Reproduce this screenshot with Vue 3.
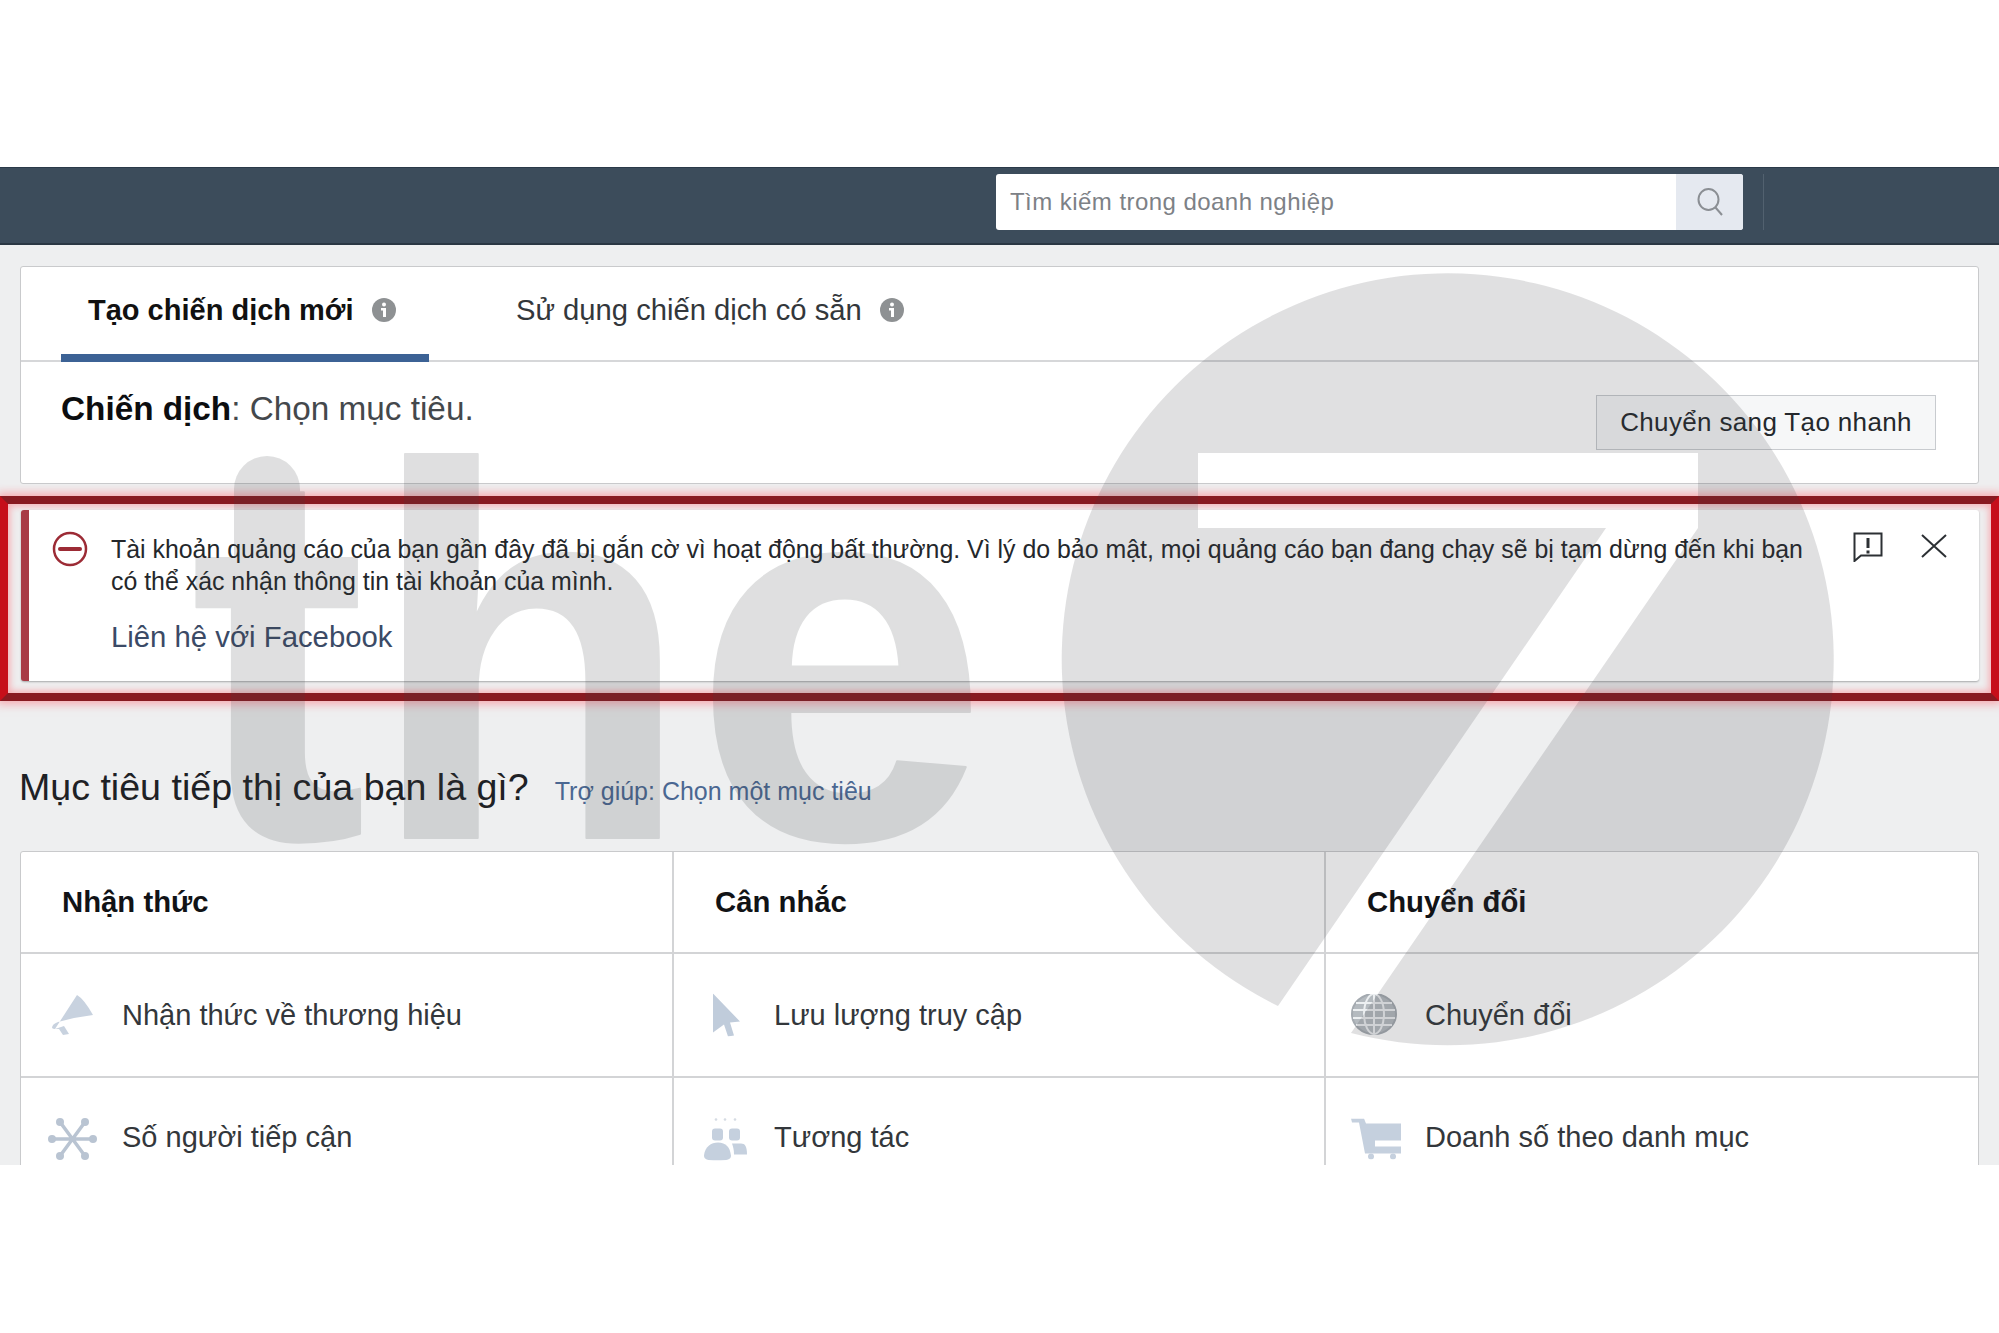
<script setup>
const alertText = 'Tài khoản quảng cáo của bạn gần đây đã bị gắn cờ vì hoạt động bất thường. Vì lý do bảo mật, mọi quảng cáo bạn đang chạy sẽ bị tạm dừng đến khi bạn có thể xác nhận thông tin tài khoản của mình.'
</script>

<template>
  <div class="page">
    <header class="topbar">
      <div class="search">
        <span class="search-text">Tìm kiếm trong doanh nghiệp</span>
        <span class="search-btn">
          <svg width="28" height="30" viewBox="0 0 28 30" fill="none" stroke="#8b8f94" stroke-width="2">
            <ellipse cx="12.5" cy="12.5" rx="10" ry="10.5" />
            <path d="M19.5 20.5 L26 28" />
          </svg>
        </span>
      </div>
      <span class="bar-divider"></span>
    </header>

    <main class="content">
      <section class="card top-card">
        <nav class="tabs">
          <div class="tab active">
            <span>Tạo chiến dịch mới</span>
            <svg class="info" viewBox="0 0 24 24"><circle cx="12" cy="12" r="12" fill="#8e9193" /><circle cx="12" cy="6.5" r="2" fill="#fff" /><path d="M9 10h5v9h-3v-6.500H9z" fill="#fff" /></svg>
          </div>
          <div class="tab">
            <span>Sử dụng chiến dịch có sẵn</span>
            <svg class="info" viewBox="0 0 24 24"><circle cx="12" cy="12" r="12" fill="#8e9193" /><circle cx="12" cy="6.500" r="2" fill="#fff" /><path d="M9 10h5v9h-3v-6.500H9z" fill="#fff" /></svg>
          </div>
        </nav>
        <div class="campaign">
          <div class="campaign-title"><b>Chiến dịch</b>: Chọn mục tiêu.</div>
          <button class="quick">Chuyển sang Tạo nhanh</button>
        </div>
      </section>

      <section class="frame">
        <div class="alert">
          <svg class="alert-icon" viewBox="0 0 36 36" fill="none">
            <circle cx="18" cy="18" r="16" stroke="#9c2b35" stroke-width="2.500" />
            <path d="M8 18h20" stroke="#9c2b35" stroke-width="4" stroke-linecap="round" />
          </svg>
          <div class="alert-body">
            <p class="alert-text">{{ alertText }}</p>
            <a class="alert-link">Liên hệ với Facebook</a>
          </div>
          <svg class="feedback" viewBox="0 0 30 30" fill="none" stroke="#2c3034" stroke-width="2">
            <path d="M1.500 1.500H28.500V23.500H8L1.500 29Z" />
            <path d="M15 6v10M15 18.500v3" stroke-width="3" />
          </svg>
          <svg class="close" viewBox="0 0 26 24" fill="none" stroke="#2c3034" stroke-width="2">
            <path d="M1 1 25 23M25 1 1 23" />
          </svg>
        </div>
      </section>

      <div class="goal-heading">
        <h2>Mục tiêu tiếp thị của bạn là gì?</h2>
        <a>Trợ giúp: Chọn một mục tiêu</a>
      </div>

      <section class="card goals">
        <div class="cell head">Nhận thức</div>
        <div class="cell head">Cân nhắc</div>
        <div class="cell head last">Chuyển đổi</div>

        <div class="cell item">
          <svg class="ico i-mega" viewBox="0 0 43 40" fill="#c8d2df">
            <path d="M25 0Q32 4 41 20L22 23 6 27Q0 29 0 33 1 34 3 34L12 31 17 39 11 40 7 34 3 34Z" />
          </svg>
          <span>Nhận thức về thương hiệu</span>
        </div>
        <div class="cell item mid">
          <svg class="ico i-cursor" viewBox="0 0 30 43" fill="#c0ccdb">
            <path d="M1 0 28 28 18 29 22 42 16 43 12 31 1 39Z" />
          </svg>
          <span>Lưu lượng truy cập</span>
        </div>
        <div class="cell item end last">
          <svg class="ico i-globe" viewBox="0 0 46 42" fill="none" stroke-width="2">
            <ellipse cx="23" cy="20" rx="22" ry="20" fill="#b4babf" stroke="#a4aab0" />
            <ellipse cx="23" cy="20" rx="10" ry="20" stroke="#eceff1" />
            <path d="M23 0v40M5 9h36M2 16h42M2 24h42M5 31h36" stroke="#eceff1" />
          </svg>
          <span>Chuyển đổi</span>
        </div>

        <div class="cell item lower">
          <svg class="ico i-star" viewBox="0 0 49 42" fill="none" stroke="#b9c4d2" stroke-width="3.500" stroke-linecap="round">
            <path d="M24.500 21 12 4M24.500 21 37 4M24.500 21H4M24.500 21H45M24.500 21 12 38M24.500 21 37 38" />
            <g fill="#b9c4d2" stroke="none"><circle cx="12" cy="4" r="4" /><circle cx="37" cy="4" r="4" /><circle cx="4" cy="21" r="4" /><circle cx="45" cy="21" r="4" /><circle cx="12" cy="38" r="4" /><circle cx="37" cy="38" r="4" /></g>
          </svg>
          <span>Số người tiếp cận</span>
        </div>
        <div class="cell item mid lower">
          <svg class="ico i-people" viewBox="0 0 43 43" fill="#c5d0de">
            <rect x="8" y="11" width="11" height="12" rx="3" />
            <rect x="25" y="11" width="11" height="12" rx="3" />
            <path d="M0 38C1 29 7 25 14 25 22 25 26 30 27 38 27 42 24 43 13 43 3 43 0 42 0 38Z" />
            <path d="M28 26H37C41 26 43 29 43 37H30C30 32 29 29 28 26Z" />
            <g fill="#d5dbe3"><circle cx="12" cy="2" r="1.300" /><circle cx="21" cy="2" r="1.300" /><circle cx="31" cy="2" r="1.300" /></g>
          </svg>
          <span>Tương tác</span>
        </div>
        <div class="cell item end last lower">
          <svg class="ico i-cart" viewBox="0 0 50 41" fill="#c5d0de">
            <path d="M0 0H13L15 5H50V22H24V28H50V35H14L8 4H1Z" />
            <circle cx="20" cy="38" r="3" /><circle cx="42" cy="38" r="3" />
          </svg>
          <span>Doanh số theo danh mục</span>
        </div>
      </section>
    </main>

    <svg class="watermark" viewBox="0 0 1999 1333" aria-hidden="true">
      <g opacity="0.16" fill="#3c4043">
        <text class="wm-text" x="190" y="838" stroke="#3c4043" stroke-width="2" stroke-linejoin="round">the</text>
        <path d="M234 489a33 33 0 0 1 66 0V600H234Z" />
        <path d="M1278 1006 A386 386 0 1 1 1351 1033 L1698 528 V453 H1198 V528 H1606 Z" />
      </g>
    </svg>
  </div>
</template>

<style>
html, body { margin: 0; background: #fff; }
</style>

<style scoped>
.page {
  position: relative;
  width: 1999px;
  height: 1333px;
  padding-top: 167px;
  box-sizing: border-box;
  background: #fff;
  overflow: hidden;
  font-family: "Liberation Sans", Arial, sans-serif;
  color: #1d2023;
}
.topbar {
  height: 78px;
  box-sizing: border-box;
  display: flex;
  align-items: flex-start;
  padding: 6px 0 0 996px;
  background: #3c4c5b;
  border-top: 1px solid #2b3a49;
  border-bottom: 2px solid #2a3743;
}
.search {
  width: 747px;
  height: 56px;
  display: flex;
  align-items: center;
  background: #fff;
  border-radius: 3px;
  overflow: hidden;
}
.search-text {
  flex: 1;
  padding-left: 14px;
  font-size: 24px;
  letter-spacing: 0.45px;
  color: #7d8186;
}
.search-btn {
  width: 67px;
  height: 56px;
  display: flex;
  align-items: center;
  justify-content: center;
  background: #e5e9f0;
}
.bar-divider {
  width: 1px;
  height: 56px;
  margin-left: 20px;
  background: #52616f;
}
.content {
  height: 920px;
  padding-top: 21px;
  box-sizing: border-box;
  background: #eeeff0;
  overflow: hidden;
}
.card {
  margin: 0 20px 0 20px;
  background: #fff;
  border: 1px solid #c9cacc;
  border-radius: 3px;
  box-sizing: border-box;
}
.top-card { height: 218px; }
.tabs {
  height: 95px;
  box-sizing: border-box;
  display: flex;
  padding-left: 40px;
  border-bottom: 2px solid #d6d7d9;
}
.tab {
  position: relative;
  height: 95px;
  box-sizing: border-box;
  display: flex;
  align-items: center;
  gap: 18px;
  padding: 0 0 9px 26px;
  font-size: 29.2px;
  color: #33373b;
}
.tab.active {
  width: 368px;
  padding-left: 27px;
  color: #111;
  font-size: 29px;
  font-weight: 700;
  border-bottom: 8px solid #3c6295;
  padding-bottom: 1px;
  margin-right: 61px;
}
.info { width: 24px; height: 24px; flex: none; }
.campaign {
  display: flex;
  justify-content: space-between;
  padding: 27px 42px 0 40px;
}
.campaign-title {
  font-size: 33.3px;
  line-height: 40px;
  color: #44484c;
}
.campaign-title b { color: #0c0d0f; }
.quick {
  width: 340px;
  height: 55px;
  margin-top: 6px;
  padding: 0;
  font: 26px "Liberation Sans", Arial, sans-serif;
  letter-spacing: 0.35px;
  color: #24282c;
  background: #f6f7f8;
  border: 1px solid #c8cbcf;
}
.frame {
  margin-top: 12px;
  height: 205px;
  box-sizing: border-box;
  padding: 6px 12px 11px 13px;
  border: 8px solid #881a21;
  border-left-color: #c60f1a;
  border-right-color: #c60f1a;
  box-shadow: 0 0 9px 3px rgba(255, 110, 120, 0.55), inset 0 0 7px 2px rgba(255, 110, 120, 0.5);
}
.alert {
  height: 171px;
  box-sizing: border-box;
  display: flex;
  align-items: flex-start;
  padding: 21px 30px 0 0;
  background: #fff;
  border-left: 8px solid #a83b46;
  border-radius: 3px;
  box-shadow: 0 1px 2px rgba(0, 0, 0, 0.3);
}
.alert-icon { width: 36px; height: 36px; margin: 0 23px 0 23px; flex: none; }
.alert-body { width: 1705px; flex: none; margin-right: 37px; }
.alert-text {
  margin: 2px 0 0;
  font-size: 24.9px;
  line-height: 32px;
  color: #24272b;
}
.alert-link {
  display: block;
  margin-top: 22px;
  font-size: 29.3px;
  line-height: 36px;
  color: #3b4a66;
}
.feedback { width: 30px; height: 30px; flex: none; margin-top: 1px; }
.close { width: 26px; height: 24px; flex: none; margin: 3px 0 0 38px; }
.goal-heading {
  height: 50px;
  margin: 61px 20px 39px 19px;
  display: flex;
  align-items: baseline;
  gap: 26px;
}
.goal-heading h2 {
  margin: 0;
  font-size: 37.6px;
  line-height: 50px;
  font-weight: 400;
  color: #1e2125;
}
.goal-heading a {
  font-size: 25px;
  color: #4a6792;
}
.goals {
  display: grid;
  grid-template-columns: 653px 652px 1fr;
  grid-template-rows: 102px 124px 124px;
}
.cell {
  box-sizing: border-box;
  display: flex;
  align-items: center;
  border-right: 2px solid #d3d4d6;
  border-bottom: 2px solid #d3d4d6;
}
.cell.last { border-right: 0; }
.head {
  padding-left: 41px;
  font-size: 29.3px;
  font-weight: 700;
  color: #111316;
}
.item {
  position: relative;
  padding-left: 101px;
  font-size: 29px;
  color: #33373b;
}
.item.mid { padding-left: 100px; }
.item.end { padding-left: 99px; }
.item.lower { padding-bottom: 3px; }
.ico {
  position: absolute;
  top: 50%;
  transform: translateY(-50%);
}
.i-mega { left: 31px; width: 43px; height: 40px; }
.i-cursor { left: 38px; width: 30px; height: 43px; }
.i-globe { left: 25px; width: 46px; height: 42px; }
.i-star { left: 27px; width: 49px; height: 42px; }
.i-people { left: 30px; width: 43px; height: 43px; }
.i-cart { left: 25px; width: 50px; height: 41px; }
.watermark {
  position: absolute;
  left: 0;
  top: 0;
  width: 1999px;
  height: 1333px;
  pointer-events: none;
}
.wm-text {
  font-family: "Liberation Sans", Arial, sans-serif;
  font-weight: 700;
  font-size: 530px;
  letter-spacing: 1.5px;
}
</style>
